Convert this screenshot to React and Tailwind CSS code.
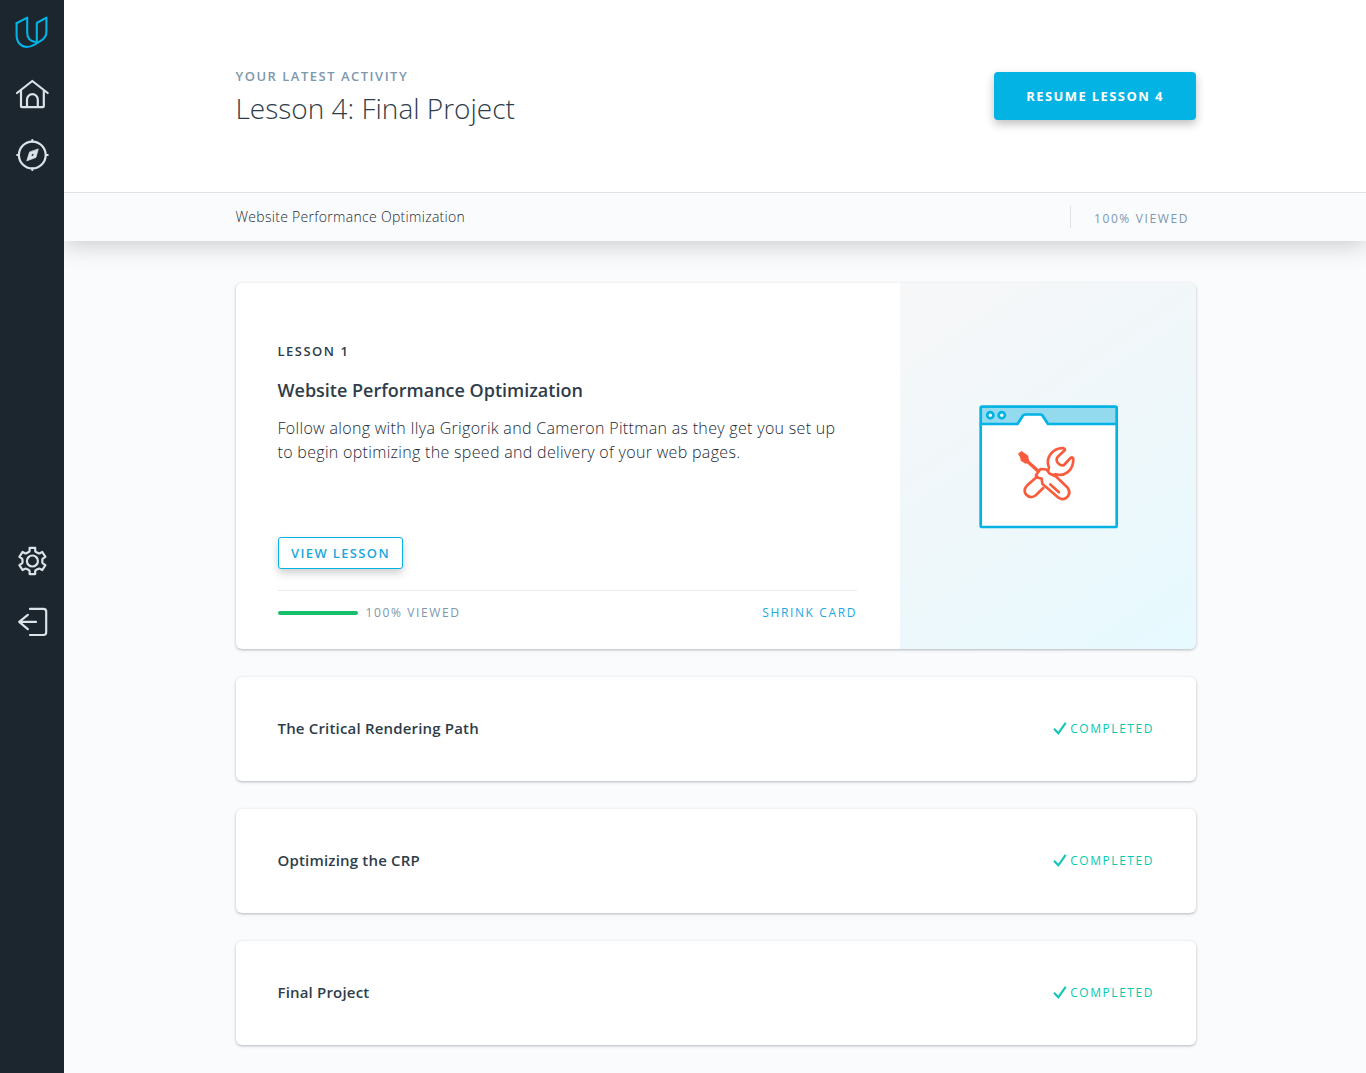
import React from "react";

const strokeProps = { fill: "none", strokeLinecap: "round", strokeLinejoin: "round" };

function Logo() {
  return (
    <svg width="64" height="64" viewBox="0 0 64 64" className="block" stroke="#02b3e4" strokeWidth="2.100" {...strokeProps}>
      <path d="M16.600 23.200 27.200 17.600V33c0 5.200 3.500 8.600 9.300 9.300" />
      <path d="M16.600 23.200V35c0 7.500 4.500 12 10.400 12 3 0 5.600-1.300 8-2.700l6-3.600c3.700-2.300 5.400-5 5.400-9V17.600L36.800 23v18" />
    </svg>
  );
}

function HomeIcon() {
  return (
    <svg width="64" height="61" viewBox="0 64 64 61" className="block" stroke="#dbe2e8" strokeWidth="2.200" {...strokeProps}>
      <path d="M17 93 32.300 81 47.700 93M21 90.500V106.200q0 1 1 1H42.800q1 0 1-1V90.500" />
      <path d="M27 107V99.600a5.400 5.400 0 0 1 10.800 0V107" />
    </svg>
  );
}

function CompassIcon() {
  return (
    <svg width="64" height="61" viewBox="0 125 64 61" className="block" stroke="#dbe2e8" strokeWidth="2.200" {...strokeProps}>
      <circle cx="32.300" cy="155" r="13.400" />
      <path d="M32.300 140v1.500M32.300 168.500v1.500M17.200 155h1.500M46 155h1.700" />
      <path fillRule="evenodd" fill="#dbe2e8" strokeWidth=".8" d="M38.200 149.300 35.900 157.400 26.800 160.800 29.500 152.300ZM32.800 153.500 31 155.100 32.100 156.600 34.100 155Z" />
    </svg>
  );
}

function GearIcon() {
  return (
    <svg width="64" height="61" viewBox="0 530 64 61" className="block" stroke="#dbe2e8" strokeWidth="2.200" {...strokeProps}>
      <circle cx="32.400" cy="561" r="5.500" />
      <path d="M29.600 547.900h5.600v3q0 .8 .8 1.100l2.500 1.300q.7 .4 1.300 0l2.500-1.300 3.100 4.900-2.300 1.500q-.8 .6-.8 1.300v2.600q0 .7 .8 1.300l2.300 1.500-3.100 4.900-2.500-1.300q-.6-.4-1.300 0l-2.500 1.300q-.8 .3-.8 1.100v3h-5.600v-3q0-.8-.8-1.100l-2.500-1.300q-.7-.4-1.300 0l-2.500 1.300-3.100-4.900 2.300-1.500q.8-.6 .8-1.300v-2.600q0-.7-.8-1.300l-2.300-1.500 3.100-4.900 2.500 1.300q.6 .4 1.300 0l2.500-1.300q.8-.3 .8-1.100Z" />
    </svg>
  );
}

function LogoutIcon() {
  return (
    <svg width="64" height="61" viewBox="0 591 64 61" className="block" stroke="#dbe2e8" strokeWidth="2.200" {...strokeProps}>
      <path d="M30 608.900H43.500q2.700 0 2.700 2.700V632.300q0 2.700-2.700 2.700H30" />
      <path d="M36 621.900H19.300M27.800 614.800 19.200 621.900 27.800 629.200" />
    </svg>
  );
}

function ToolsWindow() {
  return (
    <svg width="140" height="124" viewBox="0 0 140 124" className="block" {...strokeProps}>
      <rect x="1.500" y="1.500" width="136" height="120.500" rx="1.500" fill="#fff" />
      <path fill="#93daef" d="M1.500 1.500H137.500V19H69L63 10.500Q62.500 9.500 61 9.500H46Q44.500 9.500 44 10.500L38 19H1.500Z" />
      <g stroke="#02b3e4" strokeWidth="2.700">
        <rect x="1.700" y="1.700" width="136" height="120.300" rx="1.500" />
        <path d="M2 19H38.500L44 10.500Q44.600 9.500 46 9.500H61.500Q62.800 9.500 63.500 10.500L69 19H137" />
        <circle cx="11.300" cy="10.200" r="3.100" fill="#fff" />
        <circle cx="22.800" cy="10.200" r="3.100" fill="#fff" />
      </g>
      <g stroke="#f95c3c" strokeWidth="2.700">
        <path fill="#f95c3c" strokeWidth="1.400" d="M39.800 49 42.500 46.800 48.500 51 49.500 56.500 46.500 58 42.500 55.500 41.700 52Z" />
        <path strokeWidth="3.400" d="M48.500 56.500 58.500 65.500" />
        <path d="M69.200 65.500 70 62.500C65.500 52 75 42.600 84.500 43.200Q86.800 44 85.500 45.500L79.300 51.200Q76.500 54 78.500 57.500 81.500 61.500 85 60L91.500 53Q93.800 51.500 94.300 54C94.500 66 85 72 76.500 69.200L74.500 70" />
        <path d="M58.200 71.500 47.800 80.800Q44 85 47 89.500 51.500 94 56.500 90.500L64.200 83" />
        <path d="M57 70 61.500 64 67.500 64.500 70.500 68.500 77 71.500 88.500 82.500Q92.300 88 88.300 92 84.300 96 79.500 92.700L63.500 79 62.500 73.500 57.400 72.500Z" />
        <path d="M71.300 79.500 80 87.200" />
      </g>
    </svg>
  );
}

function Completed() {
  return (
    <div className="flex items-center text-[12px] leading-4 tracking-[1.550px] text-[#02c9b4]">
      <svg width="17" height="16" viewBox="0 0 17 16" className="block" fill="none" stroke="#15c7b8" strokeWidth="2.200">
        <path d="M1 7.800 5.300 12.300 12.700 1.900" />
      </svg>
      <span>COMPLETED</span>
    </div>
  );
}

const cardShadow = "shadow-[0_1px_3px_rgba(46,61,73,0.360)]";

function LessonRow({ title }) {
  return (
    <div className={"mt-7 flex h-[104px] items-center justify-between rounded-md bg-white pl-[41.500px] pr-[42px] " + cardShadow}>
      <h3 className="pb-[2px] text-[15px] leading-6 font-semibold tracking-[0.180px]">{title}</h3>
      <Completed />
    </div>
  );
}

export default function App() {
  return (
    <div className="flex h-[1073px] w-[1366px] overflow-hidden bg-[#fafbfc] font-['Open_Sans',sans-serif] text-[#2e3d49]">
      <nav className="z-10 flex w-16 shrink-0 flex-col bg-[#1c262e]">
        <Logo />
        <HomeIcon />
        <CompassIcon />
        <div className="h-[344px]" />
        <GearIcon />
        <LogoutIcon />
      </nav>
      <main className="min-w-0 flex-1">
        <div className="shadow-[0_5px_22px_rgba(0,0,0,0.180)]">
          <header className="flex h-[193px] justify-between border-b border-[#dbe2e8] bg-white pl-[171.500px] pr-[170px]">
            <div className="pt-[66px]">
              <p className="text-[13px] leading-5 font-semibold tracking-[1.500px] text-[#7d97ad]">YOUR LATEST ACTIVITY</p>
              <h1 className="mt-[3px] text-[28px] leading-[38px] font-light">Lesson 4: Final Project</h1>
            </div>
            <button className="mt-[72px] h-12 w-[202px] rounded-[4px] bg-[#02b3e4] pt-px text-[13px] font-bold tracking-[1.400px] text-white shadow-[0_4px_10px_rgba(0,0,0,0.250)]">RESUME LESSON 4</button>
          </header>
          <div className="flex h-12 items-center justify-between bg-[#fafbfc] pl-[171.500px] pr-[176px]">
            <span className="text-[14px] leading-6 font-light tracking-[0.300px] text-[#1b2a35]">Website Performance Optimization</span>
            <span className="mr-px flex h-[22px] items-center border-l border-[#dbe2e8] pl-[23px] pt-[3px] text-[12px] tracking-[1.620px] text-[#7d97ad]">100% VIEWED</span>
          </div>
        </div>
        <div className="ml-[172px] mt-[42px] w-[960px]">
          <section className={"flex h-[366px] overflow-hidden rounded-md bg-white " + cardShadow}>
            <div className="flex w-[664px] flex-col items-start pl-[41.500px] pt-[58px]">
              <p className="text-[13px] leading-5 font-semibold tracking-[1.500px]">LESSON 1</p>
              <h2 className="mt-4 text-[18px] leading-[26px] font-semibold">Website Performance Optimization</h2>
              <p className="mt-[13px] text-[16px] leading-6 font-light tracking-[0.315px] whitespace-nowrap text-[#1b2a35]">Follow along with Ilya Grigorik and Cameron Pittman as they get you set up<br />to begin optimizing the speed and delivery of your web pages.</p>
              <button className="ml-[0.500px] mt-[73px] h-8 w-[125px] rounded-[3px] border border-[#02b3e4] bg-white pt-px text-[13px] font-semibold tracking-[1.350px] text-[#1ca8dd] shadow-[0_4px_8px_rgba(0,0,0,0.200)]">VIEW LESSON</button>
              <div className="ml-[0.500px] mt-[21px] flex w-[579px] items-center border-t border-[#e9ecee] pt-3 text-[12px] leading-5 tracking-[1.620px]">
                <div className="h-1 w-20 rounded-full bg-[#17bf6b]" />
                <span className="ml-[7.500px] text-[#7d97ad]">100% VIEWED</span>
                <span className="ml-auto text-[#1ca8dd]">SHRINK CARD</span>
              </div>
            </div>
            <div className="flex flex-1 items-start justify-center bg-[linear-gradient(146deg,#f7f7f8_0%,#eff7fa_50%,#e6faff_100%)] pl-[2px] pt-[122px]">
              <ToolsWindow />
            </div>
          </section>
          <LessonRow title="The Critical Rendering Path" />
          <LessonRow title="Optimizing the CRP" />
          <LessonRow title="Final Project" />
        </div>
      </main>
    </div>
  );
}
